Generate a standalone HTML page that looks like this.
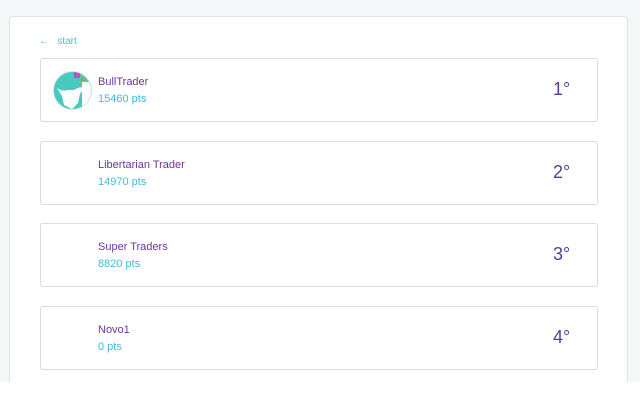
<!DOCTYPE html>
<html><head><style>
html,body{margin:0;width:640px;height:419px;overflow:hidden}
body{background:#f4f7f7;font-family:"Liberation Sans",sans-serif;position:relative}
.panel{position:absolute;left:9px;top:16px;width:617px;height:370px;background:#fff;border:1px solid #e2e4e4;border-radius:4px}
.white{position:absolute;left:0;top:382px;width:640px;height:37px;background:#fff}
.back{position:absolute;left:39px;top:36px;font-size:10px;color:#4fbfe0}
.card{position:absolute;left:40px;width:556px;height:62px;border:1px solid #dcdcdc;border-radius:3px;background:#fff}
.name{position:absolute;left:57px;top:17px;font-size:11px;color:#6e3498}
.pts{position:absolute;left:57px;top:34px;font-size:11px;color:#3cbcd8}
.rank{position:absolute;left:512px;top:20px;font-size:18px;color:#5c3a9a}
.av{position:absolute;left:12px;top:12px;width:37px;height:37px;border-radius:50%;border:1px solid #ddd;background:#48c9c0;overflow:hidden}
</style></head><body>
<div class="panel"></div>
<div class="white"></div>
<div class="back">←&nbsp;&nbsp; start</div>
<div class="card" style="top:58px"><div class="av"><svg width="37" height="37"><path d="M3 16 Q9 20 13 18 L20 18 Q26 14 30 16 L26 22 L24 31 L18 37 L10 33 L8 24 Z" fill="#fff"/><rect x="20" y="0" width="6" height="6" fill="#b054c8"/><rect x="27" y="6" width="3" height="3" fill="#f07a3c"/><rect x="28" y="10" width="9" height="27" fill="#fff"/></svg></div><div class="name">BullTrader</div><div class="pts">15460 pts</div><div class="rank">1°</div></div>
<div class="card" style="top:141px"><div class="name">Libertarian Trader</div><div class="pts">14970 pts</div><div class="rank">2°</div></div>
<div class="card" style="top:223px"><div class="name">Super Traders</div><div class="pts">8820 pts</div><div class="rank">3°</div></div>
<div class="card" style="top:306px"><div class="name">Novo1</div><div class="pts">0 pts</div><div class="rank">4°</div></div>
</body></html>
